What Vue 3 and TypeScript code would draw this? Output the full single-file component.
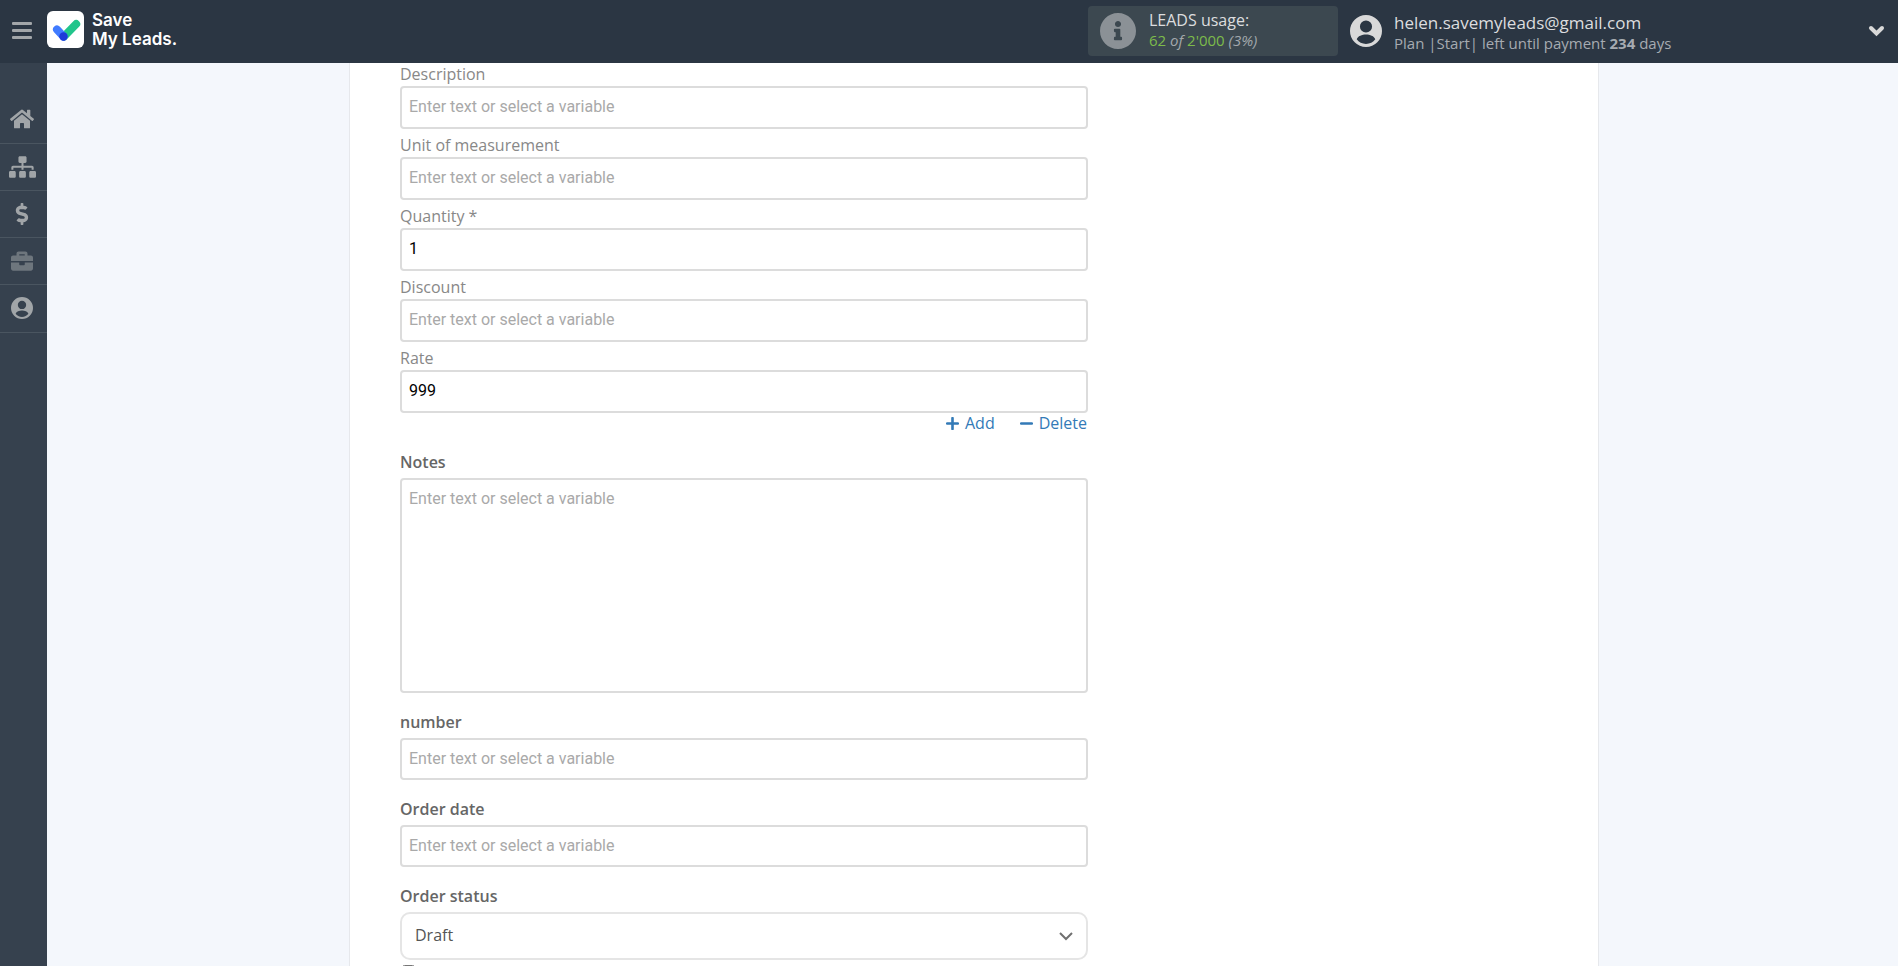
<script setup lang="ts">
import { ref } from 'vue'

interface Field {
  id: string
  label: string
  value: string
}

interface NavItem {
  label: string
  viewBox: string
  path: string
  size: string
}

const hint = 'Enter text or select a variable'

const lineFields = ref<Field[]>([
  { id: 'description', label: 'Description', value: '' },
  { id: 'unit', label: 'Unit of measurement', value: '' },
  { id: 'quantity', label: 'Quantity *', value: '1' },
  { id: 'discount', label: 'Discount', value: '' },
  { id: 'rate', label: 'Rate', value: '999' },
])

const orderFields = ref<Field[]>([
  { id: 'number', label: 'number', value: '' },
  { id: 'order-date', label: 'Order date', value: '' },
])

const notes = ref('')
const status = ref('Draft')
const extra = ref(false)

const accountPath =
  'M12 2a10 10 0 1 0 0 20 10 10 0 0 0 0-20zM12 5.4a3.8 3.8 0 1 1 0 7.6 3.8 3.8 0 0 1 0-7.6zM6.2 17.2c.6-2 3.4-3 5.8-3s5.2 1 5.8 3c-1.3 1.8-3.4 2.9-5.8 2.9s-4.5-1.1-5.8-2.9z'

const nav: NavItem[] = [
  {
    label: 'Home',
    viewBox: '0 0 576 512',
    size: 'home',
    path: 'M280.37 148.26L96 300.11V464a16 16 0 0 0 16 16l112.06-.29a16 16 0 0 0 15.92-16V368a16 16 0 0 1 16-16h64a16 16 0 0 1 16 16v95.64a16 16 0 0 0 16 16.05L464 480a16 16 0 0 0 16-16V300L295.67 148.26a12.19 12.19 0 0 0-15.3 0zM571.6 251.47L488 182.56V44.05a12 12 0 0 0-12-12h-56a12 12 0 0 0-12 12v72.61L318.47 43a48 48 0 0 0-61 0L4.34 251.47a12 12 0 0 0-1.6 16.9l25.5 31A12 12 0 0 0 45.15 301l235.22-193.74a12.19 12.19 0 0 1 15.3 0L530.9 301a12 12 0 0 0 16.9-1.6l25.5-31a12 12 0 0 0-1.7-16.93z',
  },
  {
    label: 'Connections',
    viewBox: '0 0 640 512',
    size: 'sitemap',
    path: 'M128 352H32c-17.67 0-32 14.33-32 32v96c0 17.67 14.33 32 32 32h96c17.67 0 32-14.33 32-32v-96c0-17.67-14.33-32-32-32zm-24-80h192v48h48v-48h192v48h48v-57.59c0-21.17-17.23-38.41-38.41-38.41H344v-64h40c17.67 0 32-14.33 32-32V32c0-17.67-14.33-32-32-32H256c-17.67 0-32 14.33-32 32v96c0 17.67 14.33 32 32 32h40v64H94.41C73.23 224 56 241.23 56 262.41V320h48v-48zm264 80h-96c-17.67 0-32 14.33-32 32v96c0 17.67 14.33 32 32 32h96c17.67 0 32-14.33 32-32v-96c0-17.67-14.33-32-32-32zm240 0h-96c-17.67 0-32 14.33-32 32v96c0 17.67 14.33 32 32 32h96c17.67 0 32-14.33 32-32v-96c0-17.67-14.33-32-32-32z',
  },
  {
    label: 'Payments',
    viewBox: '0 0 288 512',
    size: 'dollar',
    path: 'M209.2 233.4l-108-31.6C88.7 198.2 80 186.5 80 173.5c0-16.3 13.2-29.5 29.5-29.5h66.3c12.2 0 24.2 3.7 34.2 10.5 6.1 4.1 14.3 3.1 19.5-2l34.8-34c7.1-6.9 6.1-18.4-1.8-24.5C238 74.8 207.4 64.1 176 64V16c0-8.8-7.2-16-16-16h-32c-8.8 0-16 7.2-16 16v48h-2.5C45.8 64-5.4 118.7.5 183.6c4.2 46.1 39.4 83.6 83.8 96.6l102.5 30c12.5 3.7 21.2 15.3 21.2 28.3 0 16.3-13.2 29.5-29.5 29.5h-66.3C100 368 88 364.3 78 357.5c-6.1-4.1-14.3-3.1-19.5 2l-34.8 34c-7.1 6.9-6.1 18.4 1.8 24.5 24.5 19.2 55.1 29.9 86.5 30v48c0 8.8 7.2 16 16 16h32c8.8 0 16-7.2 16-16v-48.2c46.6-.9 90.3-28.6 105.7-72.7 21.5-61.6-14.6-124.8-72.5-141.7z',
  },
  {
    label: 'Business',
    viewBox: '0 0 512 512',
    size: 'case',
    path: 'M320 336c0 8.84-7.16 16-16 16h-96c-8.84 0-16-7.16-16-16v-48H0v144c0 25.6 22.4 48 48 48h416c25.6 0 48-22.4 48-48V288H320v48zm144-208h-80V80c0-25.6-22.4-48-48-48H176c-25.6 0-48 22.4-48 48v48H48c-25.6 0-48 22.4-48 48v80h512v-80c0-25.6-22.4-48-48-48zm-144 0H192V96h128v32z',
  },
  { label: 'Profile', viewBox: '2 2 20 20', size: 'profile', path: accountPath },
]
</script>

<template>
  <div class="page">
    <header class="topbar">
      <button class="menu" type="button" aria-label="Menu">
        <span></span><span></span><span></span>
      </button>
      <a class="brand" href="#">
        <svg class="logo" viewBox="0 0 37 37" aria-hidden="true">
          <rect width="37" height="37" rx="6" fill="#fff" />
          <path d="M17 25.5 29.2 13" stroke="#21c58b" stroke-width="8" stroke-linecap="round" />
          <path d="M10 18.5 16.5 25.5" stroke="#407bff" stroke-width="8" stroke-linecap="round" />
          <circle cx="16.5" cy="25.5" r="4.2" fill="#1d38d8" />
        </svg>
        <span class="brand-name">Save<br />My Leads.</span>
      </a>
      <div class="usage">
        <svg class="info" viewBox="8 8 496 496" aria-hidden="true">
          <path d="M256 8C119.043 8 8 119.083 8 256c0 136.997 111.043 248 248 248s248-111.003 248-248C504 119.083 392.957 8 256 8zm0 110c23.196 0 42 18.804 42 42s-18.804 42-42 42-42-18.804-42-42 18.804-42 42-42zm56 254c0 6.627-5.373 12-12 12h-88c-6.627 0-12-5.373-12-12v-24c0-6.627 5.373-12 12-12h12v-64h-12c-6.627 0-12-5.373-12-12v-24c0-6.627 5.373-12 12-12h64c6.627 0 12 5.373 12 12v100h12c6.627 0 12 5.373 12 12v24z" />
        </svg>
        <div class="usage-text">
          <div class="usage-title">LEADS usage:</div>
          <div class="usage-count"><b>62</b> <i>of</i> <b>2'000</b> <i>(3%)</i></div>
        </div>
      </div>
      <div class="account">
        <svg class="avatar" viewBox="2 2 20 20" aria-hidden="true"><path :d="accountPath" fill-rule="evenodd" /></svg>
        <div class="account-text">
          <div class="email">helen.savemyleads@gmail.com</div>
          <div class="plan">Plan |Start| left until payment <strong>234</strong> days</div>
        </div>
      </div>
      <button class="expand" type="button" aria-label="Account menu">
        <svg viewBox="0 0 17 12"><path d="M3 3 8.5 8.5 14 3" /></svg>
      </button>
    </header>

    <div class="body">
      <nav class="sidebar">
        <a v-for="item in nav" :key="item.label" href="#" :aria-label="item.label" :class="item.size">
          <svg :viewBox="item.viewBox"><path :d="item.path" fill-rule="evenodd" /></svg>
        </a>
      </nav>

      <main class="main">
        <section class="panel">
          <form class="form" @submit.prevent>
            <div class="lines">
              <div v-for="f in lineFields" :key="f.id" class="line">
                <label :for="f.id">{{ f.label }}</label>
                <input :id="f.id" v-model="f.value" type="text" :placeholder="hint" />
              </div>
            </div>
            <div class="actions">
              <button type="button">
                <svg viewBox="0 0 12 12"><path d="M6 1V11M1 6H11" /></svg>Add
              </button>
              <button type="button">
                <svg viewBox="0 0 12 12"><path d="M1 6H11" /></svg>Delete
              </button>
            </div>

            <div class="group">
              <label for="notes">Notes</label>
              <textarea id="notes" v-model="notes" :placeholder="hint"></textarea>
            </div>
            <div v-for="f in orderFields" :key="f.id" class="group">
              <label :for="f.id">{{ f.label }}</label>
              <input :id="f.id" v-model="f.value" type="text" :placeholder="hint" />
            </div>
            <div class="group">
              <label for="status">Order status</label>
              <div class="select">
                <select id="status" v-model="status">
                  <option>Draft</option>
                </select>
                <svg viewBox="0 0 14 9" aria-hidden="true"><path d="M1 1 7 7 13 1" /></svg>
              </div>
            </div>
            <input v-model="extra" class="check" type="checkbox" aria-label="Order option" />
          </form>
        </section>
      </main>
    </div>
  </div>
</template>

<style>
body {
  margin: 0;
}
</style>

<style scoped>
* {
  box-sizing: border-box;
}
.page {
  display: flex;
  flex-direction: column;
  height: 100vh;
  overflow: hidden;
  font-family: 'Open Sans', 'Noto Sans', sans-serif;
  font-size: 16px;
}
button {
  padding: 0;
  border: 0;
  background: none;
  font: inherit;
  cursor: pointer;
}
svg {
  display: block;
  flex: none;
  fill: none;
}
.topbar {
  display: flex;
  flex: none;
  align-items: center;
  height: 63px;
  padding: 0 13px 1px 12px;
  background: #2b3643;
  color: #dcdddf;
}
.menu {
  display: grid;
  gap: 4px;
  width: 20px;
  margin: 0 15px 1px 0;
}
.menu span {
  height: 3px;
  border-radius: 1px;
  background: #a2a6a9;
}
.brand {
  display: flex;
  align-items: center;
  gap: 8px;
  margin: 0 auto 3px 0;
  color: #fff;
  text-decoration: none;
}
.logo {
  width: 37px;
  height: 37px;
}
.brand-name {
  font: 600 17px/19px Inter, sans-serif;
}
.usage {
  display: flex;
  align-items: center;
  gap: 13px;
  width: 250px;
  height: 50px;
  padding-left: 12px;
  border-radius: 4px;
  background: #3c4850;
}
.info {
  width: 36px;
  height: 36px;
  fill: #8b9196;
}
.usage-text {
  padding-bottom: 3px;
}
.usage-title {
  line-height: 20px;
}
.usage-count {
  font-size: 15px;
  line-height: 20px;
  color: #a3a8ad;
}
.usage-count b {
  font-weight: 400;
  color: #7dbb4b;
}
.account {
  display: flex;
  align-items: center;
  gap: 12px;
  width: 486px;
  padding-left: 12px;
}
.avatar {
  width: 32px;
  height: 32px;
  fill: #d9d9d9;
}
.account-text {
  padding-top: 3px;
}
.email {
  font-size: 17px;
  line-height: 20px;
}
.plan {
  font-size: 15px;
  line-height: 20px;
  color: #a6abb1;
}
.expand {
  margin-left: 44px;
}
.expand svg {
  width: 17px;
  height: 12px;
  stroke: #d9d9d9;
  stroke-width: 4;
  stroke-linecap: round;
}
.body {
  display: flex;
  flex: 1;
  min-height: 0;
}
.sidebar {
  flex: none;
  width: 47px;
  padding-top: 33px;
  background: #36414e;
}
.sidebar a {
  display: flex;
  align-items: center;
  justify-content: center;
  height: 47px;
  padding: 0 3px 1px 0;
  border-bottom: 1px solid #4a5560;
}
.sidebar svg {
  width: 22px;
  height: 22px;
  fill: #a1a5a8;
}
.sidebar .home {
  height: 48px;
}
.sidebar .home svg {
  width: 24px;
}
.sidebar .sitemap svg {
  width: 27px;
}
.sidebar .case svg {
  fill: #6e767d;
}
.sidebar .profile {
  height: 48px;
}
.main {
  flex: 1;
  min-width: 0;
  padding-left: 3px;
  background: #f4f7fc;
  overflow: hidden;
}
.panel {
  max-width: 1250px;
  min-height: 100%;
  margin: 0 auto;
  padding: 0 50px;
  border: 1px solid #e6e8ec;
  border-width: 0 1px;
  background: #fff;
}
.form {
  max-width: 688px;
}
.lines {
  display: grid;
  gap: 5px;
}
.line label {
  display: block;
  line-height: 23px;
  color: #888;
}
input[type='text'],
textarea {
  display: block;
  width: 100%;
  height: 42px;
  padding: 0 7px 2px;
  border: 2px solid #dcdcdc;
  border-radius: 4px;
  background: #fff;
  font: 16px/20px Roboto, sans-serif;
  color: #000;
}
.line input[type='text'] {
  height: 43px;
}
textarea {
  height: 215px;
  padding-top: 9px;
  resize: none;
}
::placeholder {
  color: #a9a9a9;
}
.actions {
  display: flex;
  justify-content: flex-end;
  gap: 25px;
  padding-right: 1px;
}
.actions button {
  display: flex;
  align-items: center;
  gap: 6px;
  line-height: 20px;
  color: #337ab7;
}
.actions svg {
  width: 13px;
  height: 13px;
  stroke: #337ab7;
  stroke-width: 2.4;
  stroke-linecap: round;
}
.group label {
  display: block;
  padding-top: 17px;
  margin-bottom: 4px;
  font-weight: 600;
  line-height: 24px;
  color: #666;
}
.select {
  display: grid;
  align-items: center;
}
.select > * {
  grid-area: 1 / 1;
}
.select select {
  width: 100%;
  height: 48px;
  padding: 0 13px 2px;
  border: 2px solid #e5e5e5;
  border-radius: 10px;
  appearance: none;
  background: #fff;
  font: inherit;
  color: #555;
}
.select svg {
  justify-self: end;
  width: 14px;
  height: 9px;
  margin-right: 15px;
  stroke: #707070;
  stroke-width: 2;
  pointer-events: none;
}
.check {
  display: block;
  width: 13px;
  height: 13px;
  margin: 5px 2px;
}
</style>
